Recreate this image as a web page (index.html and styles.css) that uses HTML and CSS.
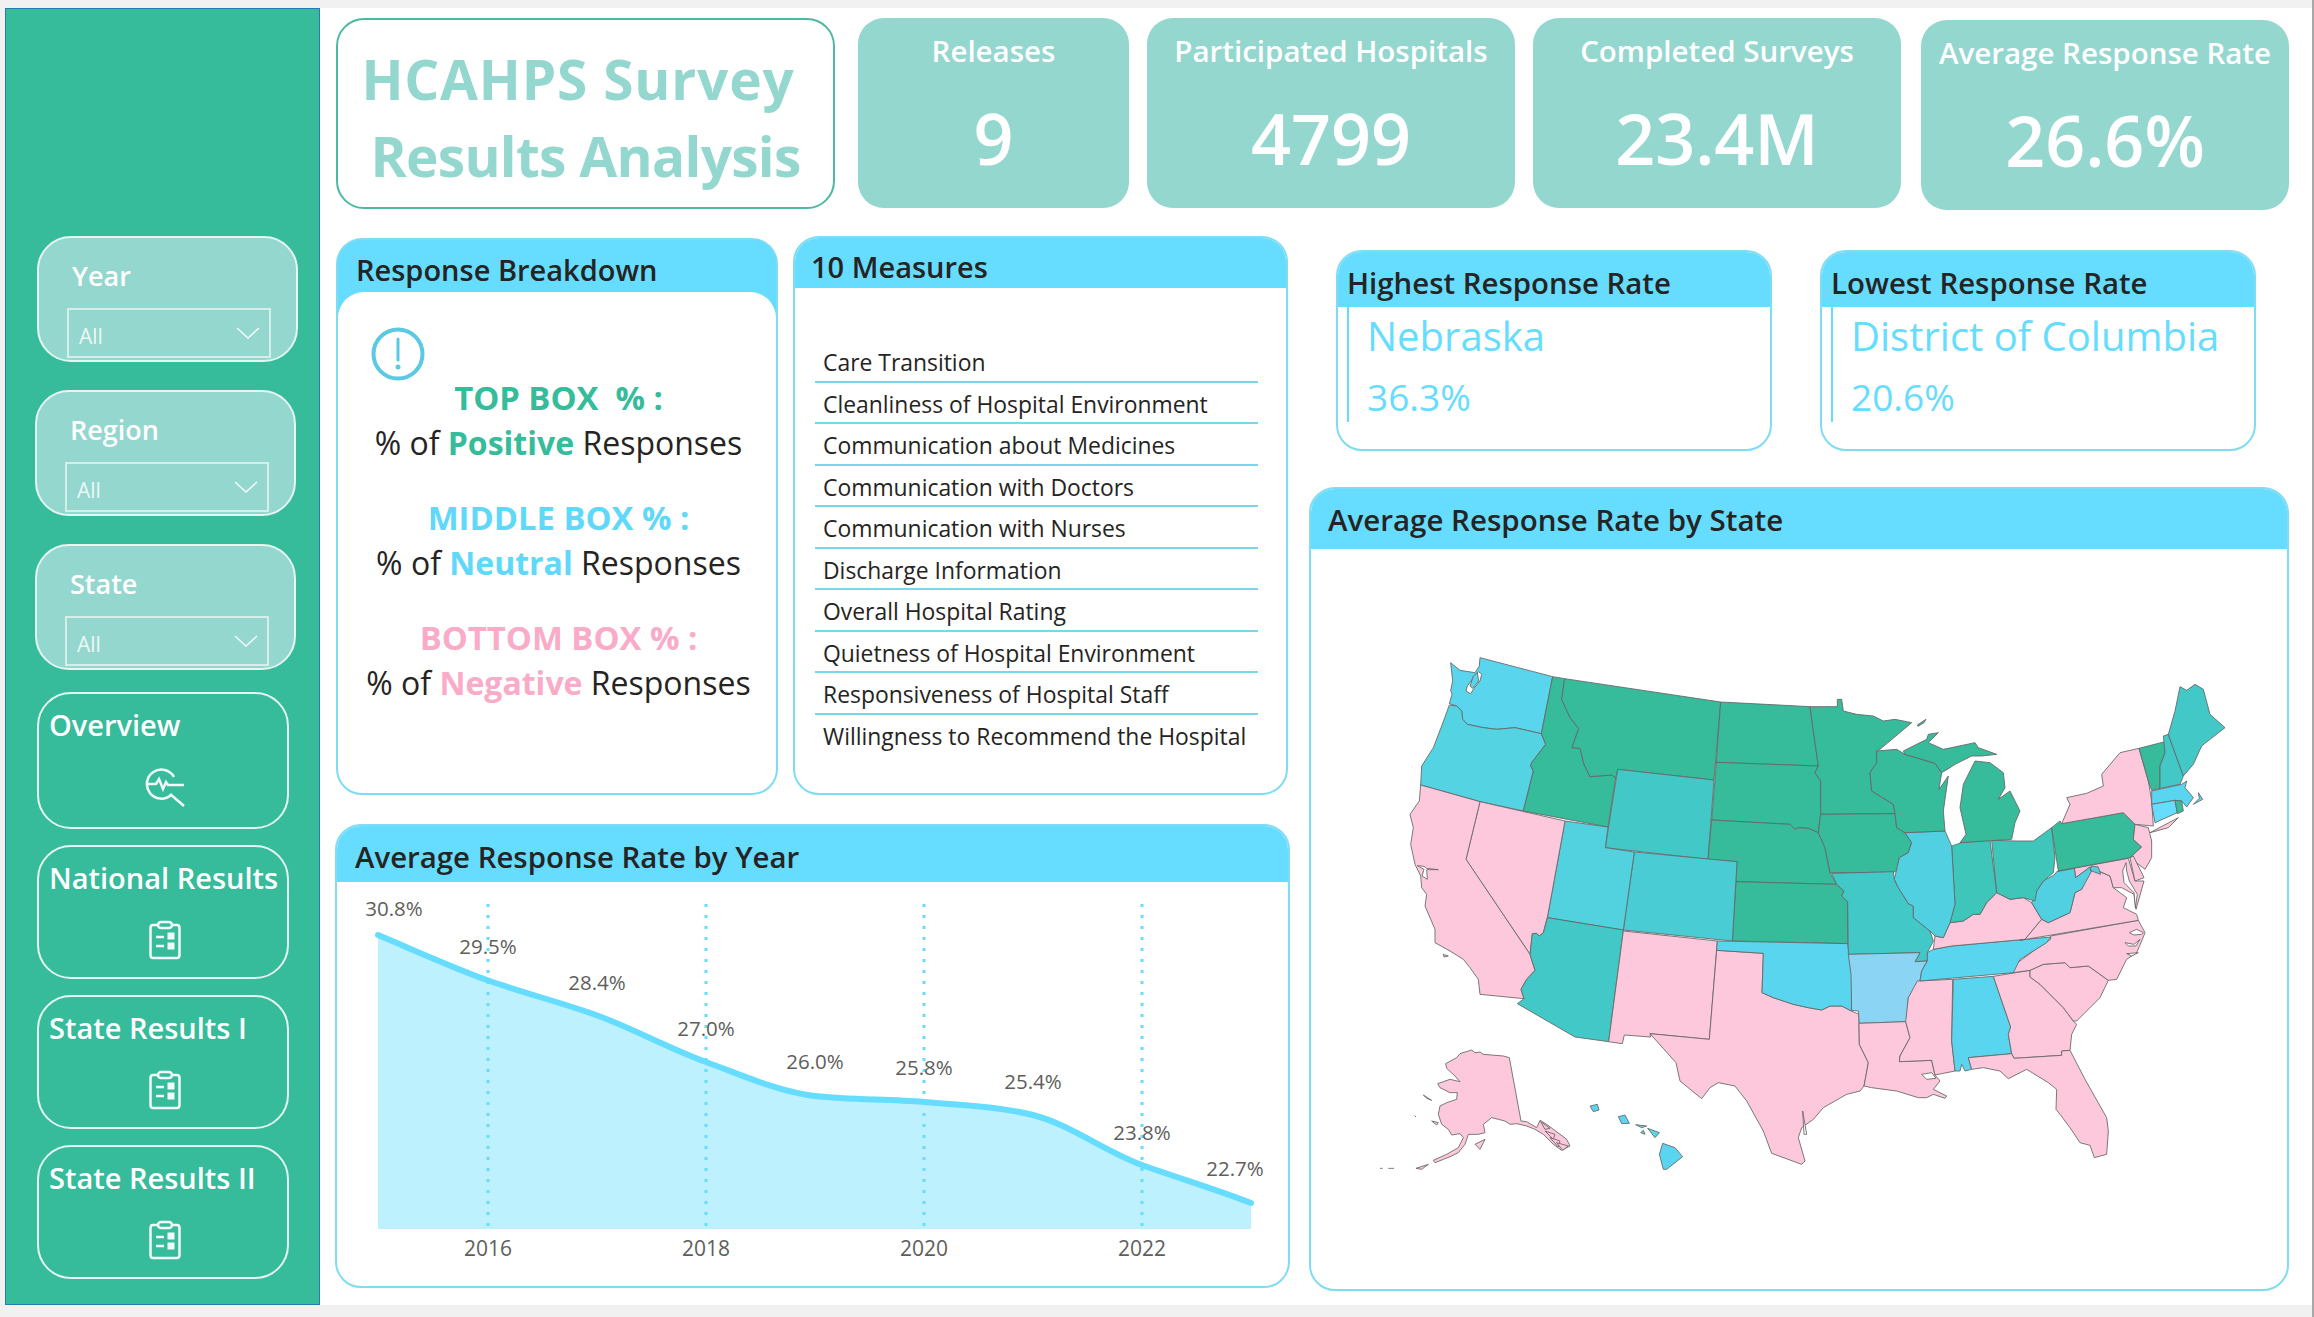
FILE: index.html
```html
<!DOCTYPE html>
<html lang="en">
<head>
    <meta charset="UTF-8">
    <title>HCAHPS Survey Results Analysis</title>
    <link rel="stylesheet" href="styles.css">
</head>
<body>
<div class="report">
    <aside class="sidebar">
        <div class="slicer slicer-year">
            <div class="slicer-label">Year</div>
            <div class="dropdown"><span>All</span>
                <svg class="chevron" viewBox="0 0 24 12"><path d="M1 1 L12 11 L23 1"/></svg>
            </div>
        </div>
        <div class="slicer">
            <div class="slicer-label">Region</div>
            <div class="dropdown"><span>All</span>
                <svg class="chevron" viewBox="0 0 24 12"><path d="M1 1 L12 11 L23 1"/></svg>
            </div>
        </div>
        <div class="slicer">
            <div class="slicer-label">State</div>
            <div class="dropdown"><span>All</span>
                <svg class="chevron" viewBox="0 0 24 12"><path d="M1 1 L12 11 L23 1"/></svg>
            </div>
        </div>

        <div class="nav-btn nav-first">
            <div class="nav-label">Overview</div>
            <svg class="nav-icon icon-overview" viewBox="0 0 40 40">
                <path d="M29 10 A14.5 14.5 0 1 0 26 28"/>
                <path d="M2 17 H11 L14 12 L18 22 L21 15 L23 18 H39"/>
                <path d="M25 27 L39 39"/>
            </svg>
        </div>
        <div class="nav-btn">
            <div class="nav-label">National Results</div>
            <svg class="nav-icon icon-clip" viewBox="0 0 32 40">
                <path d="M9 5 H4 Q1.500 5 1.500 8 V35 Q1.500 38 4 38 H28 Q30.500 38 30.500 35 V8 Q30.500 5 28 5 H23"/>
                <rect x="9" y="2" width="14" height="6" rx="3"/>
                <path d="M7 17 H15 M7 26 H15"/>
                <rect class="clip-box" x="19" y="13" width="6" height="6"/>
                <rect class="clip-box" x="19" y="23" width="6" height="6"/>
            </svg>
        </div>
        <div class="nav-btn">
            <div class="nav-label">State Results I</div>
            <svg class="nav-icon icon-clip" viewBox="0 0 32 40">
                <path d="M9 5 H4 Q1.500 5 1.500 8 V35 Q1.500 38 4 38 H28 Q30.500 38 30.500 35 V8 Q30.500 5 28 5 H23"/>
                <rect x="9" y="2" width="14" height="6" rx="3"/>
                <path d="M7 17 H15 M7 26 H15"/>
                <rect class="clip-box" x="19" y="13" width="6" height="6"/>
                <rect class="clip-box" x="19" y="23" width="6" height="6"/>
            </svg>
        </div>
        <div class="nav-btn">
            <div class="nav-label">State Results II</div>
            <svg class="nav-icon icon-clip" viewBox="0 0 32 40">
                <path d="M9 5 H4 Q1.500 5 1.500 8 V35 Q1.500 38 4 38 H28 Q30.500 38 30.500 35 V8 Q30.500 5 28 5 H23"/>
                <rect x="9" y="2" width="14" height="6" rx="3"/>
                <path d="M7 17 H15 M7 26 H15"/>
                <rect class="clip-box" x="19" y="13" width="6" height="6"/>
                <rect class="clip-box" x="19" y="23" width="6" height="6"/>
            </svg>
        </div>
    </aside>

    <main class="content">
        <div class="top-row">
            <div class="title-card">
                <div class="title-a">HCAHPS Survey&nbsp;</div>
                <div class="title-b">Results Analysis</div>
            </div>
            <div class="kpi kpi-small">
                <div class="kpi-label">Releases</div>
                <div class="kpi-value">9</div>
            </div>
            <div class="kpi">
                <div class="kpi-label">Participated Hospitals</div>
                <div class="kpi-value">4799</div>
            </div>
            <div class="kpi">
                <div class="kpi-label">Completed Surveys</div>
                <div class="kpi-value">23.4M</div>
            </div>
            <div class="kpi kpi-last">
                <div class="kpi-label">Average Response Rate</div>
                <div class="kpi-value">26.6%</div>
            </div>
        </div>

        <div class="lower">
            <div class="left-col">
                <div class="left-top">
                    <section class="panel breakdown">
                        <div class="panel-head">Response Breakdown</div>
                        <div class="breakdown-body">
                            <svg class="info-icon" viewBox="0 0 54 54">
                                <circle cx="27" cy="27" r="24.500"/>
                                <path d="M27 12 V33"/>
                                <circle class="info-dot" cx="27" cy="40" r="2.500"/>
                            </svg>
                            <div class="box-group">
                                <div class="box-title c-green">TOP BOX &nbsp;% :</div>
                                <div class="box-line">% of <b class="c-green">Positive</b> Responses</div>
                            </div>
                            <div class="box-group">
                                <div class="box-title c-blue">MIDDLE BOX % :</div>
                                <div class="box-line">% of <b class="c-blue">Neutral</b> Responses</div>
                            </div>
                            <div class="box-group">
                                <div class="box-title c-pink">BOTTOM BOX % :</div>
                                <div class="box-line">% of <b class="c-pink">Negative</b> Responses</div>
                            </div>
                        </div>
                    </section>
                    <section class="panel measures">
                        <div class="panel-head">10 Measures</div>
                        <ul class="measure-list">
                            <li>Care Transition</li>
                            <li>Cleanliness of Hospital Environment</li>
                            <li>Communication about Medicines</li>
                            <li>Communication with Doctors</li>
                            <li>Communication with Nurses</li>
                            <li>Discharge Information</li>
                            <li>Overall Hospital Rating</li>
                            <li>Quietness of Hospital Environment</li>
                            <li>Responsiveness of Hospital Staff</li>
                            <li>Willingness to Recommend the Hospital</li>
                        </ul>
                    </section>
                </div>
                <section class="panel year-panel">
                    <div class="panel-head">Average Response Rate by Year</div>
                    <svg class="year-chart" viewBox="337 882 951 404">
                        <path class="area" d="M378 935 C414 950 451 967 487 980 C523 993 560 1002 596 1015 C632 1028 670 1049 706 1062 C742 1075 779 1092 815 1096 C851 1100 888 1099 924 1102 C960 1105 997 1106 1033 1115 C1069 1124 1106 1152 1142 1165 C1178 1178 1215 1189 1251 1203 V1229 H378 Z"/>
                        <path class="grid" d="M488 904 V1229 M706 904 V1229 M924 904 V1229 M1142 904 V1229"/>
                        <path class="line" d="M378 935 C414 950 451 967 487 980 C523 993 560 1002 596 1015 C632 1028 670 1049 706 1062 C742 1075 779 1092 815 1096 C851 1100 888 1099 924 1102 C960 1105 997 1106 1033 1115 C1069 1124 1106 1152 1142 1165 C1178 1178 1215 1189 1251 1203"/>
                        <text x="394" y="908">30.8%</text>
                        <text x="488" y="946">29.5%</text>
                        <text x="597" y="982">28.4%</text>
                        <text x="706" y="1028">27.0%</text>
                        <text x="815" y="1061">26.0%</text>
                        <text x="924" y="1067">25.8%</text>
                        <text x="1033" y="1081">25.4%</text>
                        <text x="1142" y="1132">23.8%</text>
                        <text x="1235" y="1168">22.7%</text>
                        <text class="axis" x="488" y="1248">2016</text>
                        <text class="axis" x="706" y="1248">2018</text>
                        <text class="axis" x="924" y="1248">2020</text>
                        <text class="axis" x="1142" y="1248">2022</text>
                    </svg>
                </section>
            </div>

            <div class="right-col">
                <div class="rate-row">
                    <section class="panel rate-card">
                        <div class="panel-head rate-head">Highest Response Rate</div>
                        <div class="rate-body">
                            <div class="rate-name">Nebraska</div>
                            <div class="rate-value">36.3%</div>
                        </div>
                    </section>
                    <section class="panel rate-card">
                        <div class="panel-head rate-head">Lowest Response Rate</div>
                        <div class="rate-body">
                            <div class="rate-name">District of Columbia</div>
                            <div class="rate-value">20.6%</div>
                        </div>
                    </section>
                </div>
                <section class="panel state-panel">
                    <div class="panel-head state-head">Average Response Rate by State</div>
                    <svg class="us-map" viewBox="-30 30 2610 1620">
                        <!-- west -->
                        <polygon class="s-wa" points="300,80 518,137 484,308 405,290 350,295 310,290 262,280 248,265 245,240 230,225 208,218 216,190 212,178 218,150 212,95 240,118 285,125 298,105"/>
                        <polygon class="s-water" points="296,122 288,130 262,165 258,180 272,188 282,172 300,150 305,130"/>
                        <polygon class="s-wa" points="280,135 292,125 296,150 278,172 270,165"/>
                        <polygon class="s-or" points="208,222 230,225 245,240 248,265 262,280 310,290 350,295 405,290 484,308 497,340 455,395 452,405 460,420 430,540 300,512 122,462 125,405 160,350 185,285"/>
                        <polygon class="s-green" points="518,137 554,143 545,205 570,260 596,293 576,350 600,352 612,400 630,437 695,432 707,440 684,588 430,540 460,420 452,405 455,395 497,340 484,308"/>
                        <polygon class="s-green" points="554,143 1022,213 1002,447 713,415 707,440 695,432 630,437 612,400 600,352 576,350 596,293 570,260 545,205"/>
                        <polygon class="s-teal" points="713,415 1002,447 984,685 676,650"/>
                        <polygon class="s-green" points="1022,213 1290,227 1300,300 1315,405 1009,394"/>
                        <polygon class="s-green" points="1009,394 1315,405 1305,425 1322,450 1322,550 1315,605 1285,592 1255,590 1245,595 1230,580 995,567"/>
                        <polygon class="s-green" points="995,567 1230,580 1245,595 1255,590 1285,592 1315,605 1335,650 1350,725 1370,760 1068,752 1071,692 984,685"/>
                        <polygon class="s-green" points="1068,752 1370,760 1392,780 1385,795 1403,812 1403,938 1057,930"/>
                        <polygon class="s-co" points="763,663 1071,692 1057,930 730,897"/>
                        <polygon class="s-ut" points="555,570 684,588 676,650 763,663 730,897 502,860"/>
                        <polygon class="s-pink" points="300,512 555,570 502,860 490,905 478,915 470,907 457,908 450,970 258,685"/>
                        <polygon class="s-pink" points="122,462 300,512 258,685 450,970 465,1018 440,1045 423,1075 432,1103 300,1090 295,1045 270,1010 250,985 210,960 165,935 165,895 135,825 140,790 125,770 122,735 105,700 92,640 100,590 90,550 118,510"/>
                        <polygon class="s-water" points="112,704 132,706 140,712 175,716 140,716 142,745 126,735 132,715"/>
                        <polygon class="s-pink" points="190,970 205,975 192,978"/>
                        <polygon class="s-teal" points="457,908 470,907 478,915 490,905 502,860 730,897 686,1232 585,1218 412,1118 432,1103 423,1075 440,1045 465,1018 450,970"/>
                        <polygon class="s-pink" points="730,900 1012,930 988,1225 810,1208 812,1218 733,1212 727,1238 686,1232"/>
                        <polygon class="s-pink" points="1010,958 1150,967 1146,1085 1180,1100 1240,1120 1285,1130 1325,1137 1350,1125 1385,1125 1414,1140 1437,1150 1437,1177 1438,1240 1465,1295 1452,1365 1440,1380 1400,1390 1330,1430 1300,1465 1265,1490 1255,1520 1275,1590 1265,1600 1175,1567 1150,1500 1100,1410 1065,1365 1015,1355 990,1370 965,1403 900,1350 888,1295 810,1208 988,1225"/>
                        <polygon class="s-ok" points="1012,930 1403,938 1407,970 1415,1030 1414,1140 1385,1125 1350,1125 1325,1137 1285,1130 1240,1120 1180,1100 1146,1085 1150,967 1010,958"/>
                        <polygon class="s-water" points="1268,1440 1280,1510 1272,1510"/>

                        <!-- midwest -->
                        <polygon class="s-green" points="1290,227 1372,227 1372,205 1385,205 1390,240 1430,250 1480,255 1510,270 1545,265 1595,275 1500,355 1490,360 1490,395 1470,425 1475,480 1540,520 1545,548 1322,550 1322,450 1305,425 1315,405 1300,300"/>
                        <polygon class="s-green" points="1322,550 1545,548 1550,590 1575,605 1595,635 1585,665 1558,680 1555,715 1540,725 1350,725 1335,650 1315,605"/>
                        <polygon class="s-teal" points="1355,727 1540,722 1543,745 1555,770 1585,818 1600,825 1600,860 1650,900 1660,930 1642,965 1642,990 1605,992 1620,965 1405,970 1403,812 1385,795 1392,780 1370,760"/>
                        <polygon class="s-ar" points="1405,970 1620,965 1605,992 1642,990 1625,1020 1620,1048 1585,1100 1580,1172 1438,1177 1435,1140 1415,1138 1413,1030"/>
                        <polygon class="s-pink" points="1437,1177 1577,1172 1590,1220 1560,1275 1558,1292 1655,1288 1665,1332 1680,1350 1660,1375 1700,1395 1695,1402 1660,1390 1640,1400 1615,1400 1550,1380 1475,1370 1452,1365 1465,1295 1438,1240"/>
                        <polygon class="s-water" points="1625,1330 1655,1325 1668,1342 1640,1345"/>
                        <polygon class="s-pink" points="1612,1050 1718,1045 1715,1230 1725,1320 1665,1332 1655,1288 1558,1292 1560,1275 1590,1220 1577,1172 1585,1100"/>
                        <polygon class="s-cyan" points="1720,1045 1840,1036 1892,1188 1885,1210 1895,1268 1765,1280 1775,1315 1755,1320 1745,1300 1740,1320 1725,1320 1715,1230"/>
                        <polygon class="s-pink" points="1840,1036 1950,1018 1950,1038 1980,1060 2050,1130 2080,1170 2090,1180 2075,1210 2070,1258 2045,1260 2045,1273 1902,1282 1895,1268 1885,1210 1892,1188"/>
                        <polygon class="s-pink" points="1765,1280 1895,1268 1902,1282 2045,1273 2045,1260 2070,1258 2115,1345 2180,1460 2185,1500 2180,1570 2143,1580 2130,1543 2100,1535 2070,1490 2040,1450 2028,1435 2030,1375 2005,1355 1940,1315 1885,1343 1860,1320 1810,1310 1775,1315"/>
                        <polygon class="s-pink" points="1950,1018 1990,1000 2055,995 2070,1010 2125,1005 2185,1048 2160,1100 2130,1130 2090,1170 2080,1170 2050,1130 1980,1060 1950,1038"/>
                        <polygon class="s-pink" points="2012,915 2275,868 2295,905 2285,930 2270,965 2240,985 2210,1045 2185,1048 2125,1005 2070,1010 2055,995 1990,1000 1950,1018 1898,1025 1900,1005 1960,960 2012,925"/>
                        <polygon class="s-water" points="2248,905 2270,895 2290,905 2285,910 2262,912"/>
                        <polygon class="s-water" points="2235,935 2262,940 2280,925 2268,945 2245,945"/>
                        <polygon class="s-water" points="2240,968 2275,965 2255,975"/>
                        <polygon class="s-cyan" points="1660,955 1715,945 2012,918 2000,935 1960,960 1920,985 1900,1025 1620,1050 1625,1020 1642,990 1642,965"/>
                        <polygon class="s-pink" points="1660,955 1665,915 1690,920 1710,875 1750,870 1780,850 1800,850 1820,815 1850,785 1890,805 1930,800 1955,815 1985,865 1935,925 1715,945"/>
                        <polygon class="s-pink" points="1935,925 1985,865 2005,875 2070,845 2085,785 2105,775 2130,710 2190,735 2200,770 2240,800 2230,830 2270,850 2275,868 1920,928"/>
                        <polygon class="s-pink" points="2035,720 2245,682 2265,750 2292,750 2268,835 2262,790 2225,770 2200,770 2190,735 2130,708 2087,740 2083,712"/>
                        <polygon class="s-il" points="2030,722 2083,712 2087,740 2130,708 2135,720 2105,775 2085,785 2070,845 2005,875 1985,865 1955,815 1970,780 1990,750 2025,730"/>
                        <polygon class="s-il" points="2135,705 2155,708 2162,730 2130,718"/>
                        <polygon class="s-oh" points="1835,628 1910,630 1960,630 2015,590 2025,680 2020,725 1990,750 1970,780 1965,810 1930,800 1890,805 1850,785"/>
                        <polygon class="s-oh" points="1715,645 1745,635 1830,628 1850,785 1820,815 1800,850 1780,850 1750,870 1710,875 1725,820"/>
                        <polygon class="s-il" points="1575,605 1695,600 1715,645 1725,820 1710,875 1690,920 1665,915 1650,900 1600,860 1600,825 1585,818 1555,770 1543,745 1558,680 1585,665 1595,635"/>
                        <polygon class="s-green" points="1490,360 1550,355 1575,370 1665,397 1685,425 1677,475 1705,435 1690,540 1695,600 1575,605 1550,590 1545,548 1540,520 1475,480 1470,425 1490,395"/>
                        <polygon class="s-green" points="1570,360 1640,325 1645,310 1675,305 1645,335 1690,355 1785,335 1795,350 1850,370 1805,375 1775,375 1725,400 1710,410 1685,425 1665,397 1575,370"/>
                        <polygon class="s-green" points="1758,610 1740,530 1750,460 1785,390 1830,395 1870,425 1875,470 1855,505 1890,480 1920,540 1905,575 1895,625 1740,635"/>
                        <polygon class="s-green" points="1612,282 1638,265 1632,275 1614,286"/>

                        <!-- northeast -->
                        <polygon class="s-green" points="2015,590 2040,570 2045,578 2230,545 2265,580 2260,625 2285,648 2250,680 2035,720"/>
                        <polygon class="s-pink" points="2045,578 2070,520 2060,500 2120,487 2170,465 2165,430 2220,365 2277,352 2305,450 2315,510 2320,585 2265,580 2230,545"/>
                        <polygon class="s-pink" points="2310,605 2395,560 2365,590"/>
                        <polygon class="s-pink" points="2265,580 2305,590 2315,630 2315,680 2295,715 2250,680 2285,648 2260,625"/>
                        <polygon class="s-pink" points="2250,680 2260,675 2292,740 2265,750"/>
                        <polygon class="s-water" points="2238,695 2228,720 2232,755 2262,785 2266,830 2272,790 2248,750 2240,720"/>
                        <polygon class="s-green" points="2277,352 2355,332 2355,365 2340,405 2340,472 2315,478 2305,450"/>
                        <polygon class="s-teal" points="2350,315 2365,310 2410,435 2400,460 2340,472 2340,405 2355,365"/>
                        <polygon class="s-teal" points="2365,310 2385,240 2400,167 2420,178 2445,160 2470,175 2490,250 2535,290 2490,325 2465,345 2440,400 2410,435"/>
                        <polygon class="s-cyan" points="2315,480 2405,460 2420,450 2415,470 2440,500 2420,528 2405,510 2385,508 2315,520"/>
                        <polygon class="s-cyan" points="2455,485 2468,505 2440,520 2458,502"/>
                        <polygon class="s-ct" points="2315,520 2385,508 2392,545 2325,575"/>
                        <polygon class="s-green" points="2385,508 2405,510 2410,540 2392,548"/>

                        <!-- alaska and hawaii -->
                        <polygon class="s-pink" points="275,1257 285,1265 300,1263 310,1270 370,1275 388,1280 423,1470 440,1472 470,1490 480,1468 500,1480 560,1525 570,1545 545,1558 520,1540 490,1510 465,1495 440,1485 410,1478 390,1480 375,1470 355,1465 335,1460 310,1480 315,1505 295,1510 265,1510 255,1540 235,1565 215,1575 190,1585 165,1595 160,1588 200,1570 235,1550 250,1520 240,1508 215,1512 205,1495 185,1480 175,1450 180,1425 200,1415 230,1405 232,1385 210,1385 180,1370 173,1358 210,1345 240,1352 225,1335 200,1312 197,1298 230,1280 240,1268"/>
                        <polygon class="s-pink" points="482,1472 510,1492 495,1495"/>
                        <polygon class="s-pink" points="495,1500 525,1510 520,1525"/>
                        <polygon class="s-pink" points="510,1520 540,1530 535,1548"/>
                        <polygon class="s-pink" points="530,1535 565,1545 548,1558"/>
                        <polygon class="s-pink" points="130,1392 155,1408 140,1402"/>
                        <polygon class="s-pink" points="155,1470 175,1475 170,1482"/>
                        <polygon class="s-pink" points="285,1540 315,1525 300,1555"/>
                        <polygon class="s-pink" points="108,1612 145,1600 125,1615"/>
                        <path class="s-line" d="M0 1612 H8 M25 1612 H42 M104 1454 L108 1458"/>
                        <polygon class="s-cyan" points="630,1425 652,1420 657,1437 640,1442"/>
                        <polygon class="s-cyan" points="715,1457 735,1452 748,1477 725,1478"/>
                        <polygon class="s-cyan" points="767,1481 800,1485 785,1490"/>
                        <polygon class="s-cyan" points="782,1505 790,1498 795,1510"/>
                        <polygon class="s-cyan" points="803,1492 838,1505 825,1520"/>
                        <polygon class="s-cyan" points="848,1537 885,1550 908,1577 860,1615 850,1615 838,1570"/>
                    </svg>
                </section>
            </div>
        </div>
    </main>
</div>
</body>
</html>
```

FILE: styles.css
```css
* {
    box-sizing: border-box;
}
body {
    height: 100vh;
    margin: 0;
    overflow: hidden;
    background-color: #f1f1f1;
    border-right: 2px solid #a8a8a8;
    font-family: "Open Sans", "Noto Sans", sans-serif;
    color: #252423;
}
.report {
    display: flex;
    width: 2307px;
    height: 1297px;
    margin: 8px 0 0 5px;
    background-color: #fff;
}

/* sidebar */
.sidebar {
    display: flex;
    flex-direction: column;
    width: 315px;
    padding-top: 227px;
    background-color: #36bb9b;
    border: 1px solid #2a79b0;
}
.slicer {
    width: 261px;
    height: 126px;
    margin: 0 0 28px 29px;
    padding: 20px 0 0 33px;
    background-color: #94d7cf;
    border: 2px solid #e4f5f2;
    border-radius: 34px;
}
.slicer-year {
    margin-left: 31px;
}
.slicer-label {
    height: 40px;
    font-size: 27px;
    font-weight: 600;
    line-height: 36px;
    color: #fff;
}
.dropdown {
    display: flex;
    align-items: center;
    justify-content: space-between;
    width: 204px;
    height: 50px;
    margin: 9.500px 0 0 -5px;
    padding: 6px 9px 0 10px;
    border: 2px solid #d6eeea;
    font-size: 21px;
    color: #edf8f6;
}
.chevron {
    width: 24px;
    height: 12px;
    margin-top: -6px;
}
.chevron path {
    fill: none;
    stroke: #f4fbfa;
    stroke-width: 1.500;
}
.nav-btn {
    display: flex;
    flex-direction: column;
    width: 252px;
    height: 134px;
    margin: 0 0 16px 31px;
    padding: 12px 0 0 10px;
    border: 2px solid #e4f5f2;
    border-radius: 34px;
}
.nav-first {
    height: 137px;
    margin-top: -6px;
}
.nav-label {
    height: 40px;
    font-size: 29px;
    font-weight: 600;
    line-height: 38px;
    color: #fff;
    white-space: nowrap;
}
.nav-icon {
    align-self: center;
    margin: 21px 0 0 -6px;
    fill: none;
    stroke: #f2fbf9;
    stroke-width: 2.500;
}
.icon-overview {
    width: 40px;
    height: 40px;
    margin-top: 21px;
}
.icon-clip {
    width: 32px;
    height: 40px;
}
.clip-box {
    fill: #f2fbf9;
    stroke-width: 1;
}

/* main area */
.content {
    display: flex;
    flex-direction: column;
    width: 1992px;
    padding: 10px 0 0 15px;
}
.top-row {
    display: flex;
    align-items: flex-start;
}
.title-card {
    display: flex;
    flex-direction: column;
    align-items: center;
    justify-content: center;
    width: 499px;
    height: 191px;
    margin-left: 1px;
    padding-top: 6px;
    border: 2px solid #4db8a4;
    border-radius: 28px;
    font-size: 55px;
    font-weight: 700;
    line-height: 77px;
    color: #94d7cf;
    white-space: nowrap;
}
.title-a {
    letter-spacing: 0.800px;
}
.title-b {
    letter-spacing: -0.700px;
}
.kpi {
    width: 368px;
    height: 190px;
    margin-left: 18px;
    padding-top: 14px;
    background-color: #94d7cf;
    border-radius: 26px;
    text-align: center;
    color: #fff;
}
.kpi-small {
    width: 271px;
    margin-left: 23px;
}
.kpi-last {
    margin: 2px 0 0 20px;
}
.kpi-label {
    font-size: 29.500px;
    font-weight: 600;
    line-height: 38px;
    white-space: nowrap;
}
.kpi-value {
    margin-top: 18px;
    font-size: 70px;
    font-weight: 600;
    line-height: 100px;
}
.lower {
    display: flex;
    margin-top: 26px;
}
.left-col {
    width: 955px;
}
.left-top {
    display: flex;
    align-items: flex-start;
}

/* panels */
.panel {
    display: flex;
    flex-direction: column;
    background-color: #fff;
    border: 2px solid #7fdcf3;
    border-radius: 26px;
    overflow: hidden;
}
.panel-head {
    flex: none;
    padding-left: 18px;
    background-color: #66dcff;
    font-size: 29.400px;
    font-weight: 600;
    white-space: nowrap;
    color: #252423;
}
.breakdown {
    width: 442px;
    height: 557px;
    margin: 2px 0 0 1px;
    background-color: #66dcff;
}
.breakdown .panel-head {
    height: 52px;
    font-size: 29px;
    line-height: 60px;
}
.breakdown-body {
    flex: 1;
    padding-top: 35px;
    background-color: #fff;
    border-radius: 26px 26px 0 0;
}
.info-icon {
    display: block;
    width: 54px;
    height: 54px;
    margin: 0 0 -6px 33px;
    fill: none;
    stroke: #5cc9e4;
    stroke-width: 4;
}
.info-icon path {
    stroke-width: 3;
    stroke-linecap: round;
}
.info-icon .info-dot {
    fill: #5cc9e4;
    stroke: none;
}
.box-group {
    margin-bottom: 30px;
    padding-left: 3px;
    text-align: center;
}
.box-title {
    font-size: 32.800px;
    font-weight: 700;
    line-height: 45px;
    white-space: nowrap;
}
.box-line {
    font-size: 32px;
    line-height: 45px;
    white-space: nowrap;
}
.c-green { color: #36bb9b; }
.c-blue { color: #5fd8fa; }
.c-pink { color: #f9abc8; }

.measures {
    width: 495px;
    height: 559px;
    margin-left: 15px;
}
.measures .panel-head {
    height: 50px;
    padding-left: 16px;
    font-size: 29px;
    line-height: 58px;
}
.measure-list {
    width: 443px;
    margin: 53px 0 0 20px;
    padding: 0;
    list-style: none;
    font-size: 22.900px;
}
.measure-list li {
    height: 41.500px;
    padding-left: 8px;
    line-height: 44px;
    border-bottom: 2px solid #78d8ea;
    white-space: nowrap;
}
.measure-list li:last-child {
    border-bottom: none;
}
.year-panel {
    width: 955px;
    height: 464px;
    margin-top: 29px;
}
.year-panel .panel-head {
    height: 56px;
    line-height: 62px;
}
.year-chart {
    display: block;
    width: 951px;
    height: 404px;
}
.year-chart .area {
    fill: #bdf1fe;
}
.year-chart .grid {
    fill: none;
    stroke: #66dcff;
    stroke-width: 3;
    stroke-dasharray: 3 8;
}
.year-chart .line {
    fill: none;
    stroke: #66dcff;
    stroke-width: 6;
    stroke-linecap: round;
}
.year-chart text {
    font-size: 20.500px;
    fill: #605e5c;
    text-anchor: middle;
    dominant-baseline: central;
}
.year-chart .axis {
    font-size: 21px;
}

/* right column */
.right-col {
    width: 980px;
    margin-left: 19px;
}
.rate-row {
    display: flex;
    gap: 48px;
    margin: 14px 0 0 27px;
}
.rate-card {
    width: 436px;
    height: 201px;
}
.rate-head {
    height: 55px;
    padding-left: 9px;
    line-height: 62px;
}
.rate-body {
    width: 100%;
    height: 115px;
    margin-left: 9px;
    padding-left: 18px;
    border-left: 2px solid #66dcff;
    color: #66dcff;
}
.rate-name {
    margin-top: -1px;
    font-size: 40px;
    line-height: 60px;
    white-space: nowrap;
}
.rate-value {
    margin-top: 1px;
    font-size: 37px;
    line-height: 60px;
}
.state-panel {
    width: 980px;
    height: 804px;
    margin-top: 36px;
}
.state-head {
    height: 60px;
    padding-left: 17px;
    font-size: 29.500px;
    line-height: 62px;
}
.us-map {
    display: block;
    width: 870px;
    height: 540px;
    margin: 92px 0 0 59px;
    stroke: #666;
    stroke-width: 2.600;
    stroke-linejoin: round;
}
.s-green { fill: #36bb9b; }
.s-teal { fill: #42c8c6; }
.s-oh { fill: #3ec6bb; }
.s-co { fill: #49ccd3; }
.s-ut { fill: #52d1de; }
.s-or { fill: #54d3e3; }
.s-il { fill: #51d0e2; }
.s-wa { fill: #5ad5ee; }
.s-ok { fill: #5ad5f0; }
.s-cyan { fill: #59d5ef; }
.s-ct { fill: #66dcff; }
.s-ar { fill: #8cd4f4; }
.s-pink { fill: #fec8dc; }
.s-water { fill: #fff; }
.s-line { fill: none; }
```
